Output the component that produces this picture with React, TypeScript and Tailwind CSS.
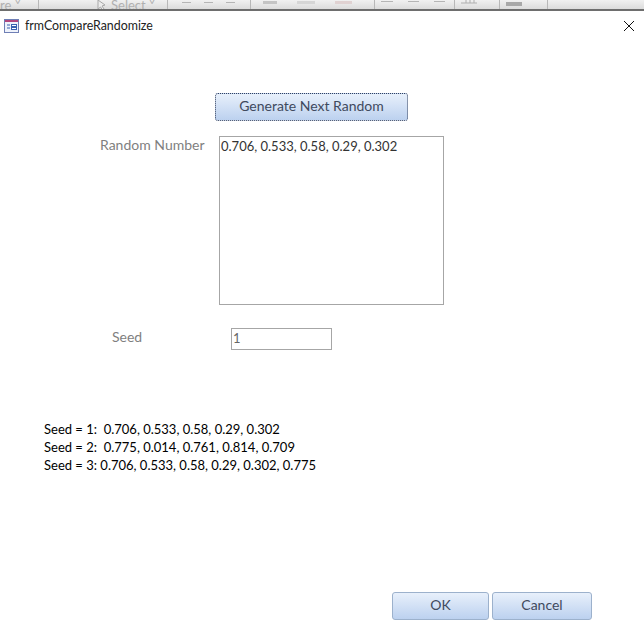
const font = { fontFamily: "Lato, sans-serif" };

function FormIcon() {
  return (
    <svg width="16" height="16" viewBox="0 0 16 16" className="shrink-0">
      <rect x="0.5" y="1.5" width="14" height="13" fill="#eef2fb" stroke="#6f7fb5" />
      <rect x="1" y="2" width="13" height="2" fill="#b0467e" />
      <path d="M3 7h3M3 10h3" stroke="#3a62b0" />
      <rect x="7.5" y="6.5" width="5" height="2" fill="#fff" stroke="#3a62b0" />
      <rect x="7.5" y="9.5" width="5" height="2" fill="#fff" stroke="#3a62b0" />
    </svg>
  );
}

function Dash({ w = "w-[9px]", c = "bg-[#b5b5b5]" }: { w?: string; c?: string }) {
  return <div className={`${w} h-px ${c} shrink-0`} />;
}

function Blob({ w, c = "bg-[#d6d6d6]" }: { w: string; c?: string }) {
  return <div className={`${w} h-[3px] ${c} shrink-0`} />;
}

export default function App() {
  return (
    <div className="w-[644px] h-[643px] bg-white overflow-hidden text-[14px] leading-[18px]" style={font}>
      <div className="h-[11px] border-b-2 border-[#6e6e6e] bg-gradient-to-b from-[#f1f1f1] to-[#dcdcdc] flex items-start text-[#b0b0b0] text-[13px] leading-[11px] overflow-hidden">
        <span className="w-[39px] border-r border-[#b8b8b8] h-full whitespace-nowrap">re ˅</span>
        <div className="w-[129px] border-r border-[#b8b8b8] h-full pl-[57px] flex items-start whitespace-nowrap">
          <svg width="11" height="10" viewBox="0 0 11 10" fill="#ececec" stroke="#a8a8a8" className="shrink-0">
            <path d="M2 0l0 9 2.5-2 2 3 1.5-1-2-3 3-1z" />
          </svg>
          <span className="ml-[4px]">Select ˅</span>
        </div>
        <div className="w-[83px] border-r border-[#b8b8b8] h-full flex gap-[13px] pl-[14px] pt-[2px]"><Dash /><Dash /><Dash /></div>
        <div className="w-[124px] border-r border-[#b8b8b8] h-full flex gap-[20px] pl-[12px] pt-[1px]"><Blob w="w-[14px]" c="bg-[#c4c4c4]" /><Blob w="w-[18px]" /><Blob w="w-[17px]" c="bg-[#e0d2d2]" /></div>
        <div className="w-[80px] border-r border-[#b8b8b8] h-full flex gap-[15px] pl-[6px] pt-[1px]"><Dash w="w-[12px]" /><Dash w="w-[11px]" /><Dash w="w-[11px]" /></div>
        <div className="w-[45px] border-r border-[#b8b8b8] h-full pl-[6px]">
          <svg width="16" height="4" viewBox="0 0 16 4" fill="none" stroke="#b0b0b0" className="block"><path d="M0 3h16M5 0v3M9 0v3M13 0v3" /></svg>
        </div>
        <div className="w-[48px] border-r border-[#b8b8b8] h-full pl-[6px] pt-[2px]"><div className="w-[16px] h-[4px] bg-[#a8a8a8]" /></div>
      </div>

      <div className="h-[29px] flex items-center pl-[4px] pr-[9px] text-[12.4px] text-[#222]">
        <FormIcon />
        <span className="ml-[5px]">frmCompareRandomize</span>
        <svg width="12" height="12" viewBox="0 0 12 12" className="ml-auto" stroke="#111" fill="none">
          <path d="M1 1l10 10M11 1L1 11" />
        </svg>
      </div>

      <div className="pl-[215px] mt-[53px]">
        <button className="w-[193px] h-[28px] rounded-[3px] border border-dotted border-[#33415f] bg-gradient-to-b from-[#e8f0fb] to-[#bcd1ef] text-[#3f4a5e] pb-[2px]">
          Generate Next Random
        </button>
      </div>

      <div className="flex mt-[15px] pl-[100px]">
        <div className="w-[119px] text-[#7f7f7f]">Random Number</div>
        <div className="w-[225px] h-[169px] border border-[#a6a6a6] px-px text-[13px] text-[#333]">0.706, 0.533, 0.58, 0.29, 0.302</div>
      </div>

      <div className="flex mt-[23px] pl-[112px]">
        <div className="w-[119px] text-[#7f7f7f]">Seed</div>
        <div className="w-[101px] h-[22px] border border-[#a6a6a6] px-px text-[13px] text-[#666]">1</div>
      </div>

      <div className="mt-[70px] pl-[44px] text-black text-[13px]">
        <div>Seed = 1:&nbsp; 0.706, 0.533, 0.58, 0.29, 0.302</div>
        <div>Seed = 2:&nbsp; 0.775, 0.014, 0.761, 0.814, 0.709</div>
        <div>Seed = 3: 0.706, 0.533, 0.58, 0.29, 0.302, 0.775</div>
      </div>

      <div className="flex gap-[3px] pl-[392px] mt-[118px]">
        <button className="w-[97px] h-[28px] rounded-[3px] border border-[#9cb1cc] bg-gradient-to-b from-[#e8f0fb] to-[#bcd1ef] text-[#3f4a5e] pb-[2px]">OK</button>
        <button className="w-[100px] h-[28px] rounded-[3px] border border-[#9cb1cc] bg-gradient-to-b from-[#e8f0fb] to-[#bcd1ef] text-[#3f4a5e] pb-[2px]">Cancel</button>
      </div>
    </div>
  );
}
